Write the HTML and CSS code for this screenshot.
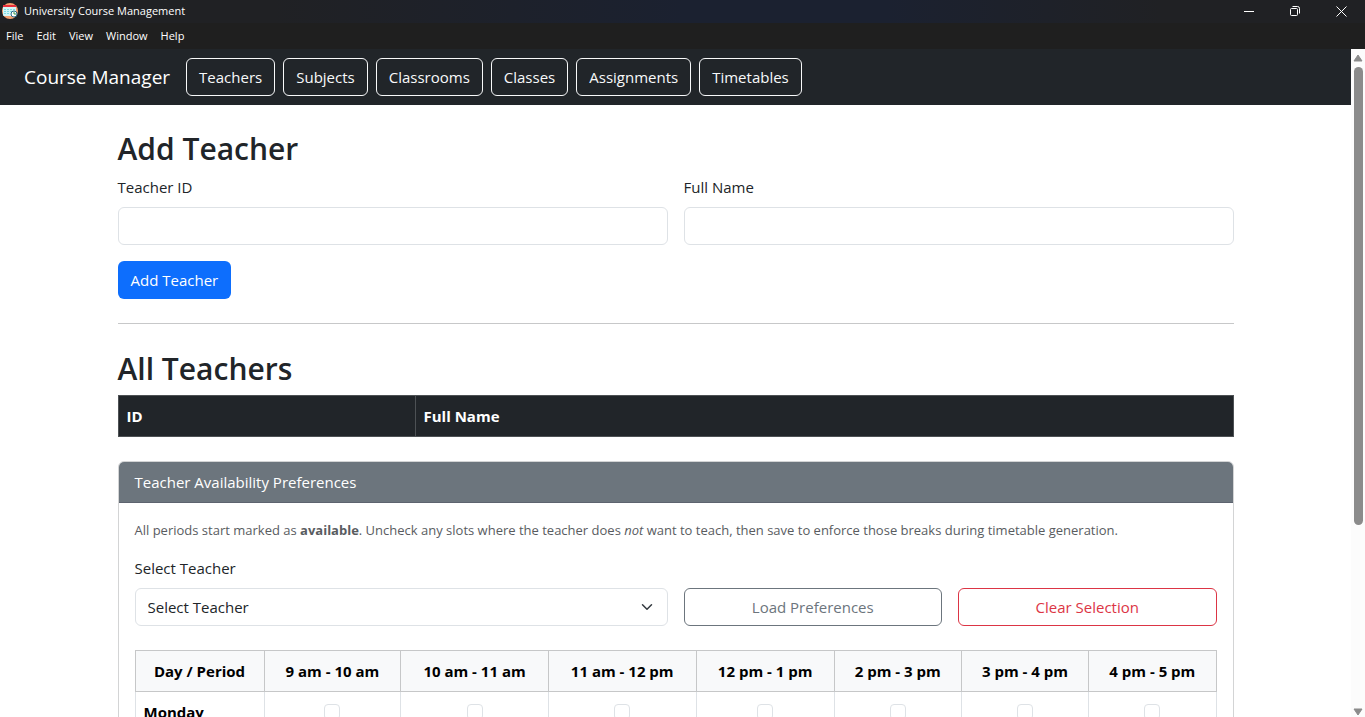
FILE: index.html
```html
<!DOCTYPE html>
<html lang="en">
<head>
    <meta charset="UTF-8">
    <meta name="viewport" content="width=device-width, initial-scale=1.0">
    <title>University Course Management</title>
    <link rel="stylesheet" href="styles.css">
</head>
<body>
    <header class="titlebar">
        <svg class="app-icon" width="16" height="16" viewBox="0 0 16 16">
            <circle cx="8" cy="8" r="8" fill="#f4a070"/>
            <rect x="1" y="3" width="13" height="10" rx="1" fill="#d3f7f8"/>
            <rect x="1" y="2" width="13" height="2" fill="#e8303c"/>
            <path d="M2 6.5h2M5 6.5h2M8 6.5h2M11 6.5h2M2 8.5h2M5 8.5h2M8 8.5h2M2 10.5h2M5 10.5h2" stroke="#7fdde4"/>
            <circle cx="12" cy="11" r="3" fill="#fff" stroke="#2d6a88"/>
            <path d="M12 9v2h2" fill="none" stroke="#3b9c4a"/>
        </svg>
        <span class="app-title">University Course Management</span>
        <div class="window-buttons">
            <button aria-label="Minimize"><svg width="11" height="11" viewBox="0 0 11 11"><path d="M0 5.5h10" stroke="#fff"/></svg></button>
            <button aria-label="Restore"><svg width="11" height="11" viewBox="0 0 11 11" fill="none" stroke="#fff"><rect x="0.5" y="2.5" width="7" height="7" rx="1"/><path d="M2.5 0.5h5a2 2 0 0 1 2 2v5"/></svg></button>
            <button aria-label="Close"><svg width="11" height="11" viewBox="0 0 11 11"><path d="M0.5 0.5l10 10M10.5 0.5l-10 10" stroke="#fff"/></svg></button>
        </div>
    </header>
    <div class="menubar">
        <button>File</button>
        <button>Edit</button>
        <button>View</button>
        <button>Window</button>
        <button>Help</button>
    </div>

    <div class="window-body">
        <div class="page">
            <nav class="navbar">
                <a class="navbar-brand" href="#">Course Manager</a>
                <button class="btn btn-outline-light">Teachers</button>
                <button class="btn btn-outline-light">Subjects</button>
                <button class="btn btn-outline-light">Classrooms</button>
                <button class="btn btn-outline-light">Classes</button>
                <button class="btn btn-outline-light">Assignments</button>
                <button class="btn btn-outline-light">Timetables</button>
            </nav>

            <main class="container">
                <h2>Add Teacher</h2>
                <form class="teacher-form">
                    <div>
                        <label for="teacherId">Teacher ID</label>
                        <input class="form-control" type="text" id="teacherId">
                    </div>
                    <div>
                        <label for="fullName">Full Name</label>
                        <input class="form-control" type="text" id="fullName">
                    </div>
                    <div>
                        <button class="btn btn-primary" type="button">Add Teacher</button>
                    </div>
                </form>

                <hr>

                <h2>All Teachers</h2>
                <table class="teacher-table">
                    <thead>
                        <tr>
                            <th class="id-col">ID</th>
                            <th>Full Name</th>
                        </tr>
                    </thead>
                </table>

                <section class="card">
                    <div class="card-header">Teacher Availability Preferences</div>
                    <div class="card-body">
                        <p>All periods start marked as <strong>available</strong>. Uncheck any slots where the teacher does <em>not</em> want to teach, then save to enforce those breaks during timetable generation.</p>
                        <div class="select-row">
                            <div class="select-group">
                                <label for="teacherSelect">Select Teacher</label>
                                <div class="select-box">
                                    <select class="form-control" id="teacherSelect">
                                        <option>Select Teacher</option>
                                    </select>
                                    <svg class="chevron" width="12" height="12" viewBox="0 0 16 16"><path d="M2 5l6 6 6-6" fill="none" stroke="#343a40" stroke-width="2" stroke-linecap="round" stroke-linejoin="round"/></svg>
                                </div>
                            </div>
                            <button class="btn btn-outline-secondary">Load Preferences</button>
                            <button class="btn btn-outline-danger">Clear Selection</button>
                        </div>

                        <table class="period-table">
                            <thead>
                                <tr>
                                    <th class="day-col">Day / Period</th>
                                    <th>9 am - 10 am</th>
                                    <th>10 am - 11 am</th>
                                    <th>11 am - 12 pm</th>
                                    <th>12 pm - 1 pm</th>
                                    <th>2 pm - 3 pm</th>
                                    <th>3 pm - 4 pm</th>
                                    <th>4 pm - 5 pm</th>
                                </tr>
                            </thead>
                            <tbody>
                                <tr>
                                    <th>Monday</th>
                                    <td><input type="checkbox" aria-label="Monday 9 am - 10 am"></td>
                                    <td><input type="checkbox" aria-label="Monday 10 am - 11 am"></td>
                                    <td><input type="checkbox" aria-label="Monday 11 am - 12 pm"></td>
                                    <td><input type="checkbox" aria-label="Monday 12 pm - 1 pm"></td>
                                    <td><input type="checkbox" aria-label="Monday 2 pm - 3 pm"></td>
                                    <td><input type="checkbox" aria-label="Monday 3 pm - 4 pm"></td>
                                    <td><input type="checkbox" aria-label="Monday 4 pm - 5 pm"></td>
                                </tr>
                            </tbody>
                        </table>
                    </div>
                </section>
            </main>
        </div>
        <div class="scrollbar">
            <svg width="10" height="8" viewBox="0 0 10 8"><path d="M5 1l4 6H1z" fill="#8b8b8b" stroke="#8b8b8b" stroke-linejoin="round"/></svg>
            <div class="track"><div class="thumb"></div></div>
            <svg width="10" height="8" viewBox="0 0 10 8"><path d="M5 7l4-6H1z" fill="#8b8b8b" stroke="#8b8b8b" stroke-linejoin="round"/></svg>
        </div>
    </div>
</body>
</html>
```
FILE: styles.css
```css
* {
    box-sizing: border-box;
}
body {
    margin: 0;
    height: 100vh;
    display: flex;
    flex-direction: column;
    overflow: hidden;
    font-family: "Open Sans", "Noto Sans", sans-serif;
    font-size: 15px;
    line-height: 24px;
    color: #212529;
    background-color: #fff;
}
button, input, select {
    font: inherit;
}

/* window frame */
.titlebar {
    display: flex;
    align-items: center;
    height: 23px;
    flex-shrink: 0;
    padding: 0 1px 1px 2px;
    background: linear-gradient(90deg, #202124 20%, #1b2130 50%, #1b2130 65%, #202124 85%);
    color: #fff;
    font-size: 11px;
}
.app-title {
    margin-left: 6px;
}
.window-buttons {
    display: flex;
    margin-left: auto;
}
.window-buttons button {
    display: flex;
    justify-content: center;
    width: 46px;
    padding: 0;
    border: none;
    background: none;
}
.menubar {
    display: flex;
    align-items: center;
    gap: 13px;
    height: 26px;
    flex-shrink: 0;
    padding-left: 6px;
    background-color: #1f1f1f;
}
.menubar button {
    padding: 0;
    border: none;
    background: none;
    color: #fff;
    font-size: 11px;
}
.window-body {
    display: flex;
    flex: 1;
    min-height: 0;
}
.page {
    flex: 1;
    overflow: hidden;
}
.scrollbar {
    display: flex;
    flex-direction: column;
    align-items: center;
    gap: 5px;
    width: 14px;
    padding: 5px 0 1px;
    background-color: #fcfcfc;
}
.track {
    flex: 1;
}
.thumb {
    width: 9px;
    height: 72%;
    border-radius: 5px;
    background-color: #8b8b8b;
}

/* navbar */
.navbar {
    display: flex;
    align-items: center;
    gap: 8px;
    height: 56px;
    padding: 0 24px;
    background-color: #212529;
}
.navbar-brand {
    margin-right: 8px;
    color: #fff;
    font-size: 19px;
    text-decoration: none;
}
.btn {
    height: 38px;
    padding: 0 12px;
    border: 1px solid transparent;
    border-radius: 6px;
    background-color: transparent;
    cursor: pointer;
}
.btn-outline-light {
    color: #f8f9fa;
    border-color: #f8f9fa;
}
.btn-primary {
    color: #fff;
    background-color: #0d6efd;
}
.btn-outline-secondary {
    color: #6c757d;
    border-color: #6c757d;
}
.btn-outline-danger {
    color: #dc3545;
    border-color: #dc3545;
}

/* content */
.container {
    max-width: 1140px;
    margin: 24px auto;
    padding: 0 12px;
}
h2 {
    margin: 0 0 6px;
    font-size: 30px;
    font-weight: 600;
    line-height: 40px;
}
label {
    display: block;
    margin-bottom: 8px;
}
.form-control {
    display: block;
    width: 100%;
    height: 38px;
    padding: 0 12px;
    border: 1px solid #dee2e6;
    border-radius: 6px;
    background-color: #fff;
    color: #212529;
    appearance: none;
}
.teacher-form {
    display: grid;
    grid-template-columns: 1fr 1fr;
    gap: 16px;
}
hr {
    margin: 24px 0 25px;
    border: 0;
    border-top: 1px solid #c7c8c9;
}
table {
    width: 100%;
    border-collapse: collapse;
}
th, td {
    padding: 8px;
    border: 1px solid #dee2e6;
}
.teacher-table {
    margin-bottom: 24px;
}
.teacher-table th {
    background-color: #212529;
    border-color: #4d5154;
    color: #fff;
    text-align: left;
}
.teacher-table .id-col {
    width: 297px;
}
.card {
    border: 1px solid #d3d4d5;
    border-radius: 6px;
    overflow: hidden;
}
.card-header {
    padding: 8px 16px;
    border-bottom: 1px solid #5d636f;
    background-color: #6c757d;
    color: #fff;
}
.card-body {
    padding: 16px;
}
.card-body p {
    margin: 0 0 14px;
    color: #595c5f;
    font-size: 13px;
    line-height: 23px;
}
.select-row {
    display: grid;
    grid-template-columns: repeat(4, 1fr);
    gap: 16px;
    align-items: end;
    margin-bottom: 24px;
}
.select-group {
    grid-column: span 2;
}
.select-box {
    position: relative;
}
.chevron {
    position: absolute;
    right: 15px;
    top: 13px;
    pointer-events: none;
}
.period-table {
    color: #000;
    text-align: center;
}
.period-table thead th {
    border-color: #c6c7c8;
    background-color: #f8f9fa;
}
.period-table .day-col {
    width: 129px;
}
.period-table tbody th {
    text-align: left;
}
.period-table input {
    display: block;
    width: 16px;
    height: 16px;
    margin: 0 auto;
    border: 1px solid #dee2e6;
    border-radius: 4px;
    background-color: #fff;
    appearance: none;
}
```
